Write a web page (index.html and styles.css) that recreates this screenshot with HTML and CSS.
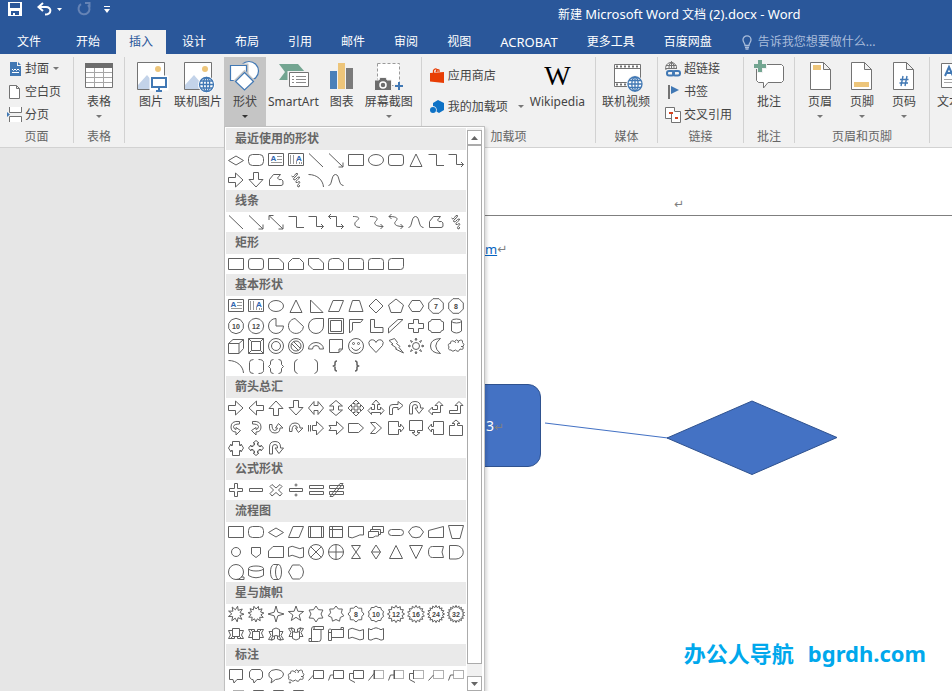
FILE: index.html
```html
<!DOCTYPE html>
<html lang="zh-CN">
<head>
<meta charset="utf-8">
<title>新建 Microsoft Word 文档 (2).docx - Word</title>
<link rel="stylesheet" href="styles.css">
</head>
<body>
<div class="app">
  <header class="titlebar">
    <div class="quick">
      <button class="qbtn save" aria-label="保存"><svg width="14" height="14" viewBox="0 0 14 14"><path fill="#fff" fill-rule="evenodd" d="M0 0H14V14H0ZM2 1V6H12V1ZM3 9V13H5V11H7V13H11V9Z"/></svg></button>
      <button class="qbtn" aria-label="撤消"><svg width="15" height="14" viewBox="0 0 15 14"><path fill="none" stroke="#fff" stroke-width="2" d="M6 1L1.500 5L6 9M2 5H9C15 5 15 12.500 8 12.500"/></svg></button>
      <button class="qbtn drop" aria-label="撤消列表"><svg width="5" height="3" viewBox="0 0 5 3"><path fill="#fff" d="M0 0H5L2.500 3Z"/></svg></button>
      <button class="qbtn redo" aria-label="重复"><svg width="14" height="14" viewBox="0 0 14 14"><path fill="none" stroke="#6583b5" stroke-width="2" d="M4 2.200A5.500 5.500 0 1 0 11 3M8 1H12.500V5.500"/></svg></button>
      <button class="qbtn" aria-label="自定义快速访问工具栏"><svg width="6" height="7" viewBox="0 0 6 7"><path fill="#fff" d="M0 0H6V1H0ZM0 3H6L3 7Z"/></svg></button>
    </div>
    <h1 class="title">新建 <span class="latin">Microsoft Word</span> 文档 <span class="latin">(2).docx - Word</span></h1>
  </header>

  <nav class="tabs">
    <button class="tab file">文件</button>
    <button class="tab">开始</button>
    <button class="tab active">插入</button>
    <button class="tab">设计</button>
    <button class="tab">布局</button>
    <button class="tab">引用</button>
    <button class="tab">邮件</button>
    <button class="tab">审阅</button>
    <button class="tab">视图</button>
    <button class="tab latin">ACROBAT</button>
    <button class="tab">更多工具</button>
    <button class="tab">百度网盘</button>
    <label class="tell">
      <svg width="10" height="15" viewBox="0 0 10 15"><path fill="none" stroke="#a9bcda" stroke-width="1.300" d="M3 10.500C3 8 1 7.500 1 4.800A4 4 0 0 1 9 4.800C9 7.500 7 8 7 10.500ZM3 12.500H7M3.500 14.200H6.500"/></svg>
      <input type="text" aria-label="告诉我您想要做什么" placeholder="告诉我您想要做什么...">
    </label>
  </nav>

  <section class="ribbon">
    <div class="group">
      <div class="stack">
        <button class="small"><svg class="ic" viewBox="0 0 16 16"><path fill="#4178b4" d="M3 1H10V5H14V15H3ZM11 1L14 4H11Z"/><path fill="none" stroke="#fff" d="M5 8L6.500 9.500L8 8L9.500 9.500L11 8L12.500 9.500M5 11.500H12"/></svg>封面<i class="arrow"></i></button>
        <button class="small"><svg class="ic" viewBox="0 0 16 16"><path fill="#fff" stroke="#737373" d="M2.500 1.500H9.500L12.500 4.500V14.500H2.500ZM9.500 1.500V4.500H12.500"/></svg>空白页</button>
        <button class="small"><svg class="ic" viewBox="0 0 16 16"><path fill="#fff" stroke="#737373" d="M2.500 0V5.500H14.500V0M2.500 15V9.500H14.500V15"/><path fill="#4178b4" d="M0 5L3 7.500L0 10Z"/></svg>分页</button>
      </div>
      <div class="caption">页面</div>
    </div>

    <div class="group">
      <div class="bigs">
        <button class="big"><svg class="pic" viewBox="0 0 32 32"><path fill="#fff" stroke="#737373" d="M2.500 3.500H29.500V27.500H2.500Z"/><path fill="#6d6d6d" d="M2 3H30V8H2Z"/><path stroke="#a6a6a6" fill="none" d="M3 12.500H29M3 17.500H29M3 22.500H29M11.500 8V27M20.500 8V27"/></svg><span>表格</span><i class="arrow"></i></button>
      </div>
      <div class="caption">表格</div>
    </div>

    <div class="group">
      <div class="bigs pictures">
        <button class="big"><svg class="pic" viewBox="0 0 32 32"><path fill="#fff" stroke="#737373" d="M2.500 2.500H29.500V29.500H2.500Z"/><circle cx="23" cy="9" r="3" fill="#edc57a"/><path fill="#c3d3e9" d="M3 25L12 15L24 29H3Z"/><path fill="#fff" stroke="#fff" stroke-width="3" d="M16 17H32V29H16Z"/><path fill="#fff" stroke="#4178b4" stroke-width="2" d="M17 18H31V27H17ZM24 27V31M21 31H27"/></svg><span>图片</span></button>
        <button class="big"><svg class="pic" viewBox="0 0 32 32"><path fill="#fff" stroke="#737373" d="M2.500 2.500H29.500V29.500H2.500Z"/><circle cx="23" cy="9" r="3" fill="#edc57a"/><path fill="#c3d3e9" d="M3 25L12 15L24 29H3Z"/><circle cx="24.500" cy="24.500" r="8.500" fill="#fff"/><g fill="none" stroke="#4178b4" stroke-width="1.300"><circle cx="24.500" cy="24.500" r="7"/><ellipse cx="24.500" cy="24.500" rx="3.200" ry="7"/><path d="M17.500 24.500H31.500M24.500 17.500V31.500M18.500 21H30.500M18.500 28H30.500"/></g></svg><span>联机图片</span></button>
        <button class="big on" aria-expanded="true"><svg class="pic" viewBox="0 0 32 32"><g fill="#fff" stroke="#4178b4" stroke-width="1.200"><circle cx="20" cy="11" r="9.500"/><path stroke="#c5c5c5" stroke-width="4" d="M1.500 5.500H17.500V20.500H1.500Z"/><path d="M1.500 5.500H17.500V20.500H1.500Z"/><path stroke="#c5c5c5" stroke-width="4" d="M15.500 12.500L24.500 21.500L15.500 30L6.500 21.500Z"/><path d="M15.500 12.500L24.500 21.500L15.500 30L6.500 21.500Z"/></g></svg><span>形状</span><i class="arrow dark"></i></button>
        <button class="big"><svg class="pic" viewBox="0 0 32 32"><path fill="#73a591" d="M2 4H21L28 12L21 20H2L8 12Z"/><path fill="#fff" stroke="#f1f1f1" stroke-width="3" d="M12 12.500H31V26.500H12Z"/><path fill="#fff" stroke="#737373" d="M12.500 12.500H31.500V26.500H12.500Z"/><path fill="none" stroke="#8a8a8a" d="M15 16.500H17M19 16.500H29M15 19.500H17M19 19.500H29M15 22.500H17M19 22.500H29"/></svg><span>SmartArt</span></button>
        <button class="big"><svg class="pic" viewBox="0 0 32 32"><path fill="#4a80b9" d="M4 11H11V29H4Z"/><path fill="#edc57a" d="M12 3H19V29H12Z"/><path fill="#7b7b7b" d="M20 8H27V29H20Z"/></svg><span>图表</span></button>
        <button class="big"><svg class="pic" viewBox="0 0 32 32"><path fill="#fff" stroke="#9a9a9a" stroke-dasharray="3 2" d="M4.500 3.500H26.500V25.500H4.500Z"/><path fill="#6d6d6d" stroke="#f1f1f1" d="M1.500 20H6L7 17.500H13L14 20H18.500V30.500H1.500Z"/><circle cx="10" cy="25" r="3" fill="#6d6d6d" stroke="#fff" stroke-width="1.500"/><path stroke="#f1f1f1" stroke-width="5" d="M21.500 26H31"/><path stroke="#4178b4" stroke-width="2" d="M22 26H30M26 22V30"/></svg><span>屏幕截图</span><i class="arrow"></i></button>
      </div>
    </div>

    <div class="group">
      <div class="addins">
        <div class="stack wide">
          <button class="small"><svg class="ic" viewBox="0 0 16 16"><path fill="#e83e05" d="M1 5L15 4V15L1 13.500Z"/><path fill="none" stroke="#e83e05" stroke-width="1.300" d="M4.500 6V2.500Q6 0 8 1.500V4M7 4Q8 .5 10 2V4"/></svg>应用商店</button>
          <button class="small"><svg class="ic" viewBox="0 0 16 16"><path fill="#0e72c6" d="M9 1L15 4V11L10 14L7.500 12.500A4 4 0 0 0 4 7V4Z"/><circle cx="4" cy="11" r="3" fill="#0e72c6"/></svg>我的加载项<i class="arrow far"></i></button>
        </div>
        <button class="big"><span class="wiki" aria-hidden="true">W</span><span>Wikipedia</span></button>
      </div>
      <div class="caption">加载项</div>
    </div>

    <div class="group">
      <div class="bigs media">
        <button class="big"><svg class="pic" viewBox="0 0 32 32"><path fill="#fff" stroke="#737373" d="M4.500 4.500H30.500V26.500H4.500ZM4.500 8.500H30.500M4.500 22.500H30.500"/><path stroke="#737373" stroke-width="2" stroke-dasharray="2 2" d="M6 6.500H30M6 24.500H30"/><circle cx="25" cy="24" r="8.500" fill="#f1f1f1"/><g fill="none" stroke="#4178b4" stroke-width="1.300"><circle cx="25" cy="24" r="7" fill="#fff"/><ellipse cx="25" cy="24" rx="3.200" ry="7"/><path d="M18 24H32M25 17V31M19 20.500H31M19 27.500H31"/></g></svg><span>联机视频</span></button>
      </div>
      <div class="caption">媒体</div>
    </div>

    <div class="group">
      <div class="stack links">
        <button class="small"><svg class="ic" viewBox="0 0 16 16"><g fill="none" stroke="#737373"><path d="M1 9A5.500 5.500 0 1 1 11.500 8M1 4.500H11.500M.5 7.500H11.500M6.500 .5V8M4 8Q3 4 6.500 .5Q10 4 9 8"/></g><g fill="none" stroke="#4178b4" stroke-width="2"><rect x="2" y="10" width="7" height="4.500" rx="2"/><rect x="8" y="10" width="7" height="4.500" rx="2"/></g></svg>超链接</button>
        <button class="small"><svg class="ic" viewBox="0 0 16 16"><path fill="#737373" d="M3 1H5V15H3Z"/><path fill="#4178b4" d="M6 2L14 6L6 10Z"/></svg>书签</button>
        <button class="small"><svg class="ic" viewBox="0 0 16 16"><path fill="#fff" stroke="#737373" d="M.5 .5H9.500V11.500H.5Z"/><path fill="#fff" stroke="#737373" d="M6.500 5V15.500H15.500V4.500H10"/><path fill="#d8431f" d="M4 5H8V7H4ZM10 10H13V12H10Z"/></svg>交叉引用</button>
      </div>
      <div class="caption">链接</div>
    </div>

    <div class="group">
      <div class="bigs">
        <button class="big"><svg class="pic" viewBox="0 0 32 32"><path fill="#fff" stroke="#737373" d="M5.500 4.500H28.500L30.500 6.500V20.500L28.500 22.500H15L10.500 28V22.500H5.500L3.500 20.500V6.500Z"/><path stroke="#f1f1f1" stroke-width="6" d="M-.5 6H14M7 -1V13"/><path stroke="#73a591" stroke-width="4" d="M1 6H13M7 0V12"/></svg><span>批注</span></button>
      </div>
      <div class="caption">批注</div>
    </div>

    <div class="group">
      <div class="bigs">
        <button class="big"><svg class="pic" viewBox="0 0 32 32"><path fill="#fff" stroke="#737373" d="M6.500 2.500H19.500L26.500 9.500V29.500H6.500ZM19.500 2.500V9.500H26.500"/><path fill="#edc57a" d="M9 5H17V10H9Z"/></svg><span>页眉</span><i class="arrow"></i></button>
        <button class="big"><svg class="pic" viewBox="0 0 32 32"><path fill="#fff" stroke="#737373" d="M5.500 2.500H18.500L25.500 9.500V29.500H5.500ZM18.500 2.500V9.500H25.500"/><path fill="#edc57a" d="M8 22H23V27H8Z"/></svg><span>页脚</span><i class="arrow"></i></button>
        <button class="big"><svg class="pic" viewBox="0 0 32 32"><path fill="#fff" stroke="#737373" d="M5.500 2.500H18.500L25.500 9.500V29.500H5.500ZM18.500 2.500V9.500H25.500"/><path fill="none" stroke="#4178b4" stroke-width="1.400" d="M15 16L13 26M19 16L17 26M12 19.500H20.500M11.500 23H20"/></svg><span>页码</span><i class="arrow"></i></button>
      </div>
      <div class="caption">页眉和页脚</div>
    </div>

    <div class="group">
      <div class="bigs">
        <button class="big"><svg class="pic" viewBox="0 0 32 32"><path fill="#fff" stroke="#737373" d="M2.500 3.500H29.500V27.500H2.500Z"/><path fill="none" stroke="#a6a6a6" d="M5 19.500H27M5 22.500H27"/><path fill="none" stroke="#4178b4" stroke-width="2" d="M6 16L10 7L14 16M7.500 13H12.500"/></svg><span>文本框</span></button>
      </div>
    </div>
  </section>

  <main class="desk">
    <article class="page">
      <div class="page-head"><span class="mark">↵</span></div>
      <p class="para"><a href="#">m</a><span class="mark">↵</span></p>
      <div class="node">3<span class="mark">↵</span></div>
      <svg class="drawing" width="294" height="76" viewBox="0 0 294 76"><path stroke="#4472c4" stroke-width="1.200" d="M1 23L124 38"/><path fill="#4472c4" stroke="#2f528f" d="M123 38L208 1L293 37.500L208 74.500Z"/></svg>
      <div class="brand"><span>办公人导航</span><span>bgrdh.com</span></div>
    </article>
  </main>

  <aside class="gallery" aria-label="形状">
    <div class="list">
      <h2>最近使用的形状</h2><div class="cells" data-set="recent"></div>
      <h2>线条</h2><div class="cells" data-set="lines"></div>
      <h2>矩形</h2><div class="cells" data-set="rects"></div>
      <h2>基本形状</h2><div class="cells" data-set="basic"></div>
      <h2>箭头总汇</h2><div class="cells" data-set="arrows"></div>
      <h2>公式形状</h2><div class="cells" data-set="math"></div>
      <h2>流程图</h2><div class="cells" data-set="flow"></div>
      <h2>星与旗帜</h2><div class="cells" data-set="stars"></div>
      <h2>标注</h2><div class="cells" data-set="callouts"></div>
    </div>
    <div class="scroll">
      <button class="step" aria-label="向上滚动"><svg width="7" height="4" viewBox="0 0 7 4"><path fill="#666" d="M0 4H7L3.500 0Z"/></svg></button>
      <div class="thumb"></div>
      <button class="step" aria-label="向下滚动"><svg width="7" height="4" viewBox="0 0 7 4"><path fill="#666" d="M0 0H7L3.500 4Z"/></svg></button>
    </div>
  </aside>
</div>
<script src="shapes.js"></script>
</body>
</html>
```

FILE: styles.css
```css
* { box-sizing: border-box; }

body {
  margin: 0;
  font: 12px/18px "Noto Sans", "Noto Sans CJK SC", sans-serif;
  color: #444;
  background: #e6e6e6;
}

button {
  border: 0;
  padding: 0;
  background: none;
  font: inherit;
  color: inherit;
  white-space: nowrap;
}

svg { display: block; flex: none; overflow: visible; }

.app {
  position: relative;
  display: flex;
  flex-direction: column;
  height: 100vh;
  overflow: hidden;
}

.latin { font-size: 13px; }

/* Title bar */
.titlebar {
  display: flex;
  flex: none;
  height: 30px;
  background: #2a579a;
  color: #fff;
}
.quick {
  display: flex;
  align-items: center;
  width: 558px;
  height: 18px;
  padding-left: 8px;
}
.save { margin-right: 15px; }
.drop { margin: 0 15px 0 5px; }
.redo { margin-right: 13px; }
.title {
  margin: 4px 0 0;
  font-size: 12px;
  line-height: 20px;
  font-weight: 400;
  white-space: nowrap;
}

/* Tabs */
.tabs {
  display: flex;
  flex: none;
  gap: 3px;
  height: 24px;
  background: #2a579a;
  color: #fff;
}
.tab { padding: 0 13px; line-height: 22px; }
.tab.file { padding: 0 17px; margin-right: 2px; }
.tab.active { background: #f1f1f1; color: #2a579a; }
.tell {
  display: flex;
  align-items: center;
  flex: 1;
  min-width: 0;
  gap: 6px;
  padding-left: 14px;
}
.tell input {
  flex: 1;
  min-width: 0;
  border: 0;
  padding: 0;
  background: none;
  font: inherit;
  color: #fff;
}
.tell input::placeholder { color: #a9bcda; opacity: 1; }

/* Ribbon */
.ribbon {
  display: flex;
  flex: none;
  height: 94px;
  padding: 3px 0 4px;
  overflow: hidden;
  background: #f1f1f1;
  border-bottom: 1px solid #d2d2d2;
}
.group {
  display: flex;
  flex: none;
  flex-direction: column;
  justify-content: space-between;
  border-right: 1px solid #d2d2d2;
}
.caption { line-height: 12px; text-align: center; color: #666; }
.bigs { display: flex; padding: 0 4px; }
.pictures { padding: 0 6px 0 5px; }
.media { padding-right: 5px; }
.big {
  display: flex;
  flex-direction: column;
  align-items: center;
  min-width: 42px;
  height: 69px;
  padding: 3px 2px 0;
}
.big.on { background: #c5c5c5; }
.pic { width: 32px; height: 32px; margin-bottom: 1px; }
.wiki {
  height: 33px;
  font: 28px/32px "Liberation Serif", serif;
  color: #000;
}
.arrow {
  margin-top: 4px;
  border: 3px solid transparent;
  border-top-color: #777;
  border-bottom: 0;
}
.arrow.dark { border-top-color: #333; }
.stack { display: flex; flex-direction: column; padding: 0 12px 0 7px; }
.small {
  display: flex;
  align-items: center;
  gap: 2px;
  height: 23px;
}
.small .arrow { margin: 0 0 0 2px; }
.small .arrow.far { margin-left: 7px; }
.links { padding-right: 11px; }
.links .small, .wide .small { gap: 3px; }
.ic { width: 16px; height: 16px; }
.addins { display: flex; padding-right: 8px; }
.wide { padding: 3px 4px 0 7px; }
.wide .small { height: 31px; }

/* Document */
.desk {
  display: flex;
  flex: 1;
  min-height: 0;
  padding-left: 226px;
}
.page {
  position: relative;
  flex: 1;
  min-width: 0;
  background: #fff;
}
.page-head {
  height: 68px;
  padding: 47px 0 0 448px;
  border-bottom: 1px solid #7f7f7f;
}
.mark { font: 12px/18px "DejaVu Sans", sans-serif; color: #7f7f7f; }
.para { display: flex; margin: 24px 0 0; padding-left: 259px; }
.para a { font-size: 13px; color: #0563c1; }

/* Shapes lying freely on the page */
.node {
  position: absolute;
  left: 100px;
  top: 236px;
  width: 215px;
  height: 83px;
  padding-left: 159px;
  border: 1px solid #2f528f;
  border-radius: 13px;
  background: #4472c4;
  color: #fff;
  font-size: 14px;
  line-height: 81px;
}
.drawing { position: absolute; left: 318px; top: 252px; }
.brand {
  position: absolute;
  right: 26px;
  bottom: 22px;
  display: flex;
  gap: 14px;
  font: bold 22px/32px "Noto Sans", "Noto Sans CJK SC", sans-serif;
  color: #00a8ec;
}

/* Shape gallery drop-down */
.gallery {
  position: absolute;
  left: 224px;
  top: 126px;
  bottom: 0;
  display: flex;
  gap: 1px;
  padding: 1px 1px 0;
  overflow: hidden;
  background: #fff;
  border: 1px solid #c0c0c0;
  border-bottom: 0;
  box-shadow: 2px 2px 3px rgba(0, 0, 0, .15);
}
.list { overflow: hidden; }
.list h2 {
  margin: 0;
  padding-left: 9px;
  background: #eaeaea;
  font-size: 12px;
  line-height: 22px;
  font-weight: 700;
  color: #666;
}
.cells { display: grid; grid-template-columns: repeat(12, 20px); grid-auto-rows: 20px; }
.cells svg {
  width: 20px;
  height: 20px;
  fill: none;
  stroke: #606060;
}
.cells text {
  fill: #444;
  stroke: none;
  font: bold 7px "Liberation Sans", sans-serif;
  text-anchor: middle;
}
.cells .letter { fill: #2f66b0; font-size: 8px; }
.cells .dots { stroke-dasharray: 1 1; }
.scroll {
  display: flex;
  flex-direction: column;
  width: 15px;
  margin-right: 1px;
  padding-top: 2px;
  background: #f1f1f1;
}
.step {
  display: grid;
  place-items: center;
  height: 15px;
  background: #fff;
  border: 1px solid #ababab;
}
.thumb {
  flex: 1;
  margin-bottom: 12px;
  background: #fff;
  border: 1px solid #ababab;
}
```

FILE: shapes.js
```js
// Every glyph is drawn on a 20 x 20 grid.
const p = d => `<path d="${d}"/>`;
const num = n => `<text x="10" y="12.5">${n}</text>`;
const ring = (n, outer, inner, turn = 0) => {
  const count = inner ? n * 2 : n;
  const pts = [];
  for (let i = 0; i < count; i++) {
    const r = inner && i % 2 ? inner : outer;
    const a = (i / count) * Math.PI * 2 - Math.PI / 2 + turn;
    pts.push((10 + r * Math.cos(a)).toFixed(1) + "," + (10 + r * Math.sin(a)).toFixed(1));
  }
  return `<polygon points="${pts.join(" ")}"/>`;
};
const circle = (r, x = 10, y = 10) => `<circle cx="${x}" cy="${y}" r="${r}"/>`;
const turned = (deg, s) => `<g transform="rotate(${deg} 10 10)">${s}</g>`;
const flipped = s => `<g transform="matrix(-1 0 0 1 20 0)">${s}</g>`;

const rect = p("M2.500 4.500H17.500V15.500H2.500Z");
const round = `<rect x="2.500" y="4.500" width="15" height="11" rx="4"/>`;
const round2 = `<rect x="2.500" y="4.500" width="15" height="11" rx="2.500"/>`;
const diamond = p("M2.500 10.500L10 6L17.500 10.500L10 15Z");
const textH = p("M2.500 3.500H17.500V15.500H2.500Z") + `<path stroke="#999" d="M11 6.500H16M11 9.500H16M5 12.500H16"/><text class="letter" x="7.500" y="11">A</text>`;
const textV = p("M2.500 3.500H17.500V15.500H2.500Z") + `<path stroke="#999" d="M4.500 5V14M7.500 5V14M10.500 11V14M13.500 12V14M15.500 12V14"/><text class="letter" x="13" y="11">A</text>`;
const line = p("M3 3.500L17 17");
const lineA = p("M3 3.500L17 17M17 12.500V17H12.500");
const lineAA = p("M3 3.500L17 17M17 12.500V17H12.500M3 8V3.500H7.500");
const ellipse = `<ellipse cx="10" cy="10" rx="7.500" ry="5.500"/>`;
const tri = p("M10 4L16 16.500H4Z");
const elbow = p("M2.500 4.500H10.500V15.500H18");
const elbowA = p("M2.500 4.500H10.500V14.500H17.500M15 12L17.500 14.500L15 17");
const elbowAA = p("M2.500 4.500H10.500V14.500H17.500M15 12L17.500 14.500L15 17M5 2L2.500 4.500L5 7");
const arrowR = p("M2.500 7.500H9.500V3L17 10L9.500 17V12.500H2.500Z");
const freeform = p("M3.500 15.500V9.500L7.500 4.500H14.500L11.500 8Q12.500 10.500 15.500 9.500Q17.500 10 17 14Q16.800 15.500 15 15.500Z");
const scribble = p("M5.500 6Q7 8.500 8.500 5.500Q10 2.500 11.500 3.500Q12 5 9 7Q6.500 9 8 10Q9.500 10 11.500 7.500Q14 6 13.500 8Q9 11.500 10 12.500Q11.500 13 13 11.500Q15 12 13 13.500Q10.500 15.500 12 17Q14 17 13.500 15");
const arc = p("M2.500 4.500C11 4.500 17 10 17.500 17");
const curve = p("M2.500 15.500C6.500 15.500 5 4.500 9.500 4.500C14 4.500 12 15.500 17.500 15.500");
const sCurve = p("M7 4.500C16 4.500 12 8 10 9.500S8 15.500 14 15.500");
const sCurveA = p("M4 4.500C14 4.500 11 8 9.500 9.500S8 14.500 17 14.500M14.500 12L17 14.500L14.500 17");
const sCurveAA = p("M3 4.500C14 4.500 11 8 9.500 9.500S8 14.500 17 14.500M14.500 12L17 14.500L14.500 17M5.500 2L3 4.500L5.500 7");
const bentUp = p("M3.500 15.500V12.500H11.500V7.500H9L13 3.500L17 7.500H14.500V15.500Z");
const uTurn = p("M3.500 16V9Q3.500 3.500 9 3.500T14.500 9V10H17.500L13 15.500L9 10H11.500V9Q11.500 6.500 9 6.500T6.500 9V16Z");
const leftRight = p("M2.500 10L8 3.500V7.500H12V3.500L17.500 10L12 16.500V12.500H8V16.500Z");
const quad = p("M10 2L13.500 5.500H11V9H14.500V6.500L18 10L14.500 13.500V11H11V14.500H13.500L10 18L6.500 14.500H9V11H5.500V13.500L2 10L5.500 6.500V9H9V5.500H6.500Z");
const tee = p("M10 2L14 6.500H11.500V11.500H14.500V9L18 12.500L14.500 16.500V14.500H5.500V16.500L2 12.500L5.500 9V11.500H8.500V6.500H6Z");
const curved = p("M13.500 3.500Q5 2.500 5 9Q5 14 10 14V17L14.500 12.500L10 9.500V11.500Q7.500 11 7.500 8.500Q8 6 13.500 6Z");
const calloutR = p("M2.500 3.500H12.500V8.500H14.500V6L18 10L14.500 14V11.500H12.500V16.500H2.500Z");
const cloud = p("M5 14Q1.500 14 3 11Q1 7.500 4.500 7.500Q4.500 3.500 8.500 5.500Q10.500 2.500 12.500 5Q17 2.500 16.500 6.500Q19 8.500 17 10.500Q18 14.500 14 13Q12.500 17 9.500 14Q6.500 16.500 5 14ZM8.500 5.500Q9.500 6 9.500 7M12.500 5L12 7M17 10.500H15");
const ribbonUp = p("M6.500 14.500H2.500L4.500 11L2.500 6.500H6.500M13.500 14.500H17.500L15.500 11L17.500 6.500H13.500M6.500 4.500H13.500V12.500H6.500ZM6.500 12.500L4.500 14.500H8.500V12.500M13.500 12.500L15.500 14.500H11.500V12.500");
const ribbonArc = p("M6.500 16L2.500 15.500L5 11.500L3 7.500L6.500 7.500M13.500 16L17.500 15.500L15 11.500L17 7.500L13.500 7.500M6.500 12.500V5.500Q10 2.500 13.500 5.500V12.500Q10 10.500 6.500 12.500L5 16L8.500 15V12M13.500 12.500L15 16L11.500 15V12");
const wave = p("M2.500 5.500Q6 3 10 5.500T17.500 5.500V15Q14 17 10 14.500T2.500 14.500Z");
const boxCall = (tail, cls = "") => `<path class="${cls}" d="M7.500 4.500H17.500V12.500H7.500Z"/>` + p(tail);

const sets = {
  recent: [diamond, round, textH, textV, line, lineA, rect, ellipse, round2, tri, elbow, elbowA,
    arrowR, turned(90, arrowR), freeform, scribble, arc, curve],
  lines: [line, lineA, lineAA, elbow, elbowA, elbowAA, sCurve, sCurveA, sCurveAA, curve, freeform, scribble],
  rects: [rect, round2,
    p("M2.500 4.500H13L17.500 9V15.500H2.500Z"),
    p("M6.500 4.500H13.500L17.500 8.500V15.500H2.500V8.500Z"),
    p("M2.500 4.500H13L17.500 9V15.500H7L2.500 11Z"),
    p("M6.500 4.500H13L17.500 8.500V15.500H2.500V8.500Q2.500 4.500 6.500 4.500Z"),
    p("M2.500 4.500H14.500Q17.500 4.500 17.500 7.500V15.500H2.500Z"),
    p("M5.500 4.500H14.500Q17.500 4.500 17.500 7.500V15.500H2.500V7.500Q2.500 4.500 5.500 4.500Z"),
    p("M5.500 4.500H17.500V12.500Q17.500 15.500 14.500 15.500H2.500V7.500Q2.500 4.500 5.500 4.500Z")],
  basic: [textH, textV, ellipse, tri, p("M4.500 4V16.500H17Z"), p("M7 4.500H17.500L13 15.500H2.500Z"), p("M6.500 4.500H13.500L17 15.500H3Z"),
    p("M10 3L17 10L10 17L3 10Z"), p("M10 3L17.500 9L15 16.500H5L2.500 9Z"), p("M6 4.500H14L17.500 10L14 15.500H6L2.500 10Z"),
    ring(8, 7.900, 0, Math.PI / 8) + num(7), ring(8, 7.900, 0, Math.PI / 8) + num(8),
    ring(10, 7.700) + num(10), ring(12, 7.700) + num(12),
    p("M10 2.500A7.500 7.500 0 1 0 17.500 10H10Z"), p("M9 2.500A7.500 7.500 0 1 0 15 15.500Q17 14 17.500 10.500Z"),
    p("M10 2.500H17.500V10A7.500 7.500 0 1 1 10 2.500Z"), p("M2.500 2.500H17.500V17.500H2.500ZM4.500 4.500H15.500V15.500H4.500Z"),
    p("M3.500 3.500H17L14.500 6.500H6.500V14L3.500 17Z"), p("M4.500 3.500H8.500V11.500H17V16.500H4.500Z"), p("M2.500 12L12 3.500H17L2.500 17Z"),
    p("M7.500 3.500H12.500V7.500H17.500V12.500H12.500V16.500H7.500V12.500H2.500V7.500H7.500Z"),
    p("M5.500 3.500H14.500Q14.500 5.500 17.500 6V14Q14.500 14.500 14.500 16.500H5.500Q5.500 14.500 2.500 14V6Q5.500 5.500 5.500 3.500Z"),
    `<ellipse cx="10.500" cy="5" rx="5" ry="2"/>` + p("M5.500 5V15Q10.500 19 15.500 15V5"),
    p("M2.500 7.500L7 3.500H17.500V12.500L13 17.500H2.500ZM2.500 7.500H13V17.500M13 7.500L17.500 3.500"),
    p("M2.500 2.500H17.500V17.500H2.500ZM5.500 5.500H14.500V14.500H5.500ZM2.500 2.500L5.500 5.500M17.500 2.500L14.500 5.500M2.500 17.500L5.500 14.500M17.500 17.500L14.500 14.500"),
    circle(7.500) + circle(4.500), circle(7.500) + circle(5) + p("M5.500 7.500L12.500 14.500M7.500 5.500L14.500 12.500"),
    p("M2.500 13A7.500 6.500 0 0 1 17.500 13H13.500A3.500 3.500 0 0 0 6.500 13Z"),
    p("M3.500 3.500H16.500V13L13 16.500H3.500ZM13 16.500V13H16.500"),
    circle(7.500) + circle(1, 7.500, 7.500) + circle(1, 12.500, 7.500) + p("M5.500 11.500Q10 17.500 14.500 11.500"),
    p("M10 16.500L3.500 9.500Q1.500 6 4.500 4Q8.500 3 10 6.500Q11.500 3 15.500 4Q18.500 6 16.500 9.500Z"),
    p("M3 4.500L8.500 2.500L11.500 6.500L10.500 7.500L14 10.500L13 11.500L17.500 17L9.500 13L10.500 12L5.500 8.500L7 8Z"),
    circle(3.500) + p("M10 2L11 4H9ZM10 18L11 16H9ZM2 10L4 9V11ZM18 10L16 9V11ZM4.500 4.500L6.500 5.500L5.500 6.500ZM15.500 4.500L14.500 6.500L13.500 5.500ZM4.500 15.500L5.500 13.500L6.500 14.500ZM15.500 15.500L13.500 14.500L14.500 13.500Z"),
    p("M14.500 2.500Q4.500 3 4.500 10T14.500 17.500Q5 10 14.500 2.500Z"), cloud,
    arc, p("M7.500 3.500Q3.500 3.500 3.500 6.500V14.500Q3.500 17.500 7.500 17.500M12.500 3.500Q17.500 3.500 17.500 6.500V14.500Q17.500 17.500 12.500 17.500"),
    p("M7.500 3.500Q4.500 3.500 4.500 6V8.500L2.500 10.500L4.500 12.500V15Q4.500 17.500 7.500 17.500M12.500 3.500Q15.500 3.500 15.500 6V8.500L17.500 10.500L15.500 12.500V15Q15.500 17.500 12.500 17.500"),
    p("M11.500 3.500Q8.500 4.500 8.500 7V14Q8.500 16.500 11.500 17.500"), p("M8.500 3.500Q11.500 4.500 11.500 7V14Q11.500 16.500 8.500 17.500"),
    `<path stroke-width="1.500" d="M11 5Q9 5 9 7V9L7.500 10L9 11V13Q9 15 11 15"/>`, `<path stroke-width="1.500" d="M9 5Q11 5 11 7V9L12.500 10L11 11V13Q11 15 9 15"/>`],
  arrows: [arrowR, flipped(arrowR), turned(270, arrowR), turned(90, arrowR), leftRight, turned(90, leftRight), quad, tee,
    p("M3.500 16.500V9Q3.500 6.500 7 6.500H12V3.500L17 7.500L12 12V9.500H8Q6.500 9.500 6.500 11V16.500Z"), uTurn,
    p("M2.500 13L6.500 9V11.500H11.500V7.500H9L13 3.500L17 7.500H14.500V14.500H6.500V17Z"), bentUp,
    curved, flipped(curved), turned(270, curved), turned(90, flipped(turned(180, flipped(flipped(curved))))),
    p("M2.500 7V13.500M4.500 7V13.500M6.500 7.500H10.500V3.500L17.500 10L10.500 17V12.500H6.500Z"),
    p("M3 7.500H10.500V3.500L17.500 10L10.500 16.500V12.500H3L5 10Z"),
    p("M2.500 5.500H12.500L17.500 10L12.500 14.500H2.500Z"), p("M4.500 4.500H9.500L15.500 10L9.500 15.500H4.500L9.500 10Z"),
    calloutR, turned(90, calloutR), flipped(calloutR), turned(270, calloutR),
    p("M6.500 3.500H13.500V7.500H15V6L17.500 10L15 14V12.500H13.500V17.500H6.500V12.500H5V14L2.500 10L5 6V7.500H6.500Z"),
    p("M10 2.500L13 5H11.500V7H13V8.500H15V7L17.500 10L15 13V11.500H13V13H11.500V15H13L10 17.500L7 15H8.500V13H7V11.500H5V13L2.500 10L5 7V8.500H7V7H8.500V5H7Z"),
    uTurn],
  math: [p("M8.500 3.500H11.500V8.500H16.500V11.500H11.500V16.500H8.500V11.500H3.500V8.500H8.500Z"), p("M3.500 8.500H16.500V11.500H3.500Z"),
    p("M6 4.500L10 8L14 4.500L16 6.500L12.500 10L16 13.500L14 16L10 12.500L6 16L4 13.500L7.500 10L4 6.500Z"),
    p("M3.500 8.500H16.500V11.500H3.500Z") + circle(1, 10, 5) + circle(1, 10, 15),
    p("M3.500 5.500H17.500V8.500H3.500ZM3.500 11.500H17.500V14.500H3.500Z"), p("M3.500 5.500H17.500V8.500H3.500ZM3.500 11.500H17.500V14.500H3.500ZM4 16.500L14 3.500H17L7 16.500Z")],
  flow: [rect, round, diamond, p("M7 4.500H17.500L13 15.500H2.500Z"), p("M2.500 4.500H17.500V15.500H2.500ZM4.500 4.500V15.500M15.500 4.500V15.500"),
    p("M3.500 4.500H16.500V15.500H3.500ZM6.500 4.500V15.500M3.500 7.500H16.500"), p("M2.500 4.500H17.500V13Q14 12 10 14.500T2.500 15Z"),
    p("M2.500 9.500H12.500V14Q9 13.500 7 15.500H2.500ZM4.500 9V7.500H14.500V12.500H13M6.500 7V4.500H17.500V10.500H15"),
    `<rect x="2.500" y="7.500" width="15" height="6" rx="3"/>`, p("M6 5.500Q10 3.500 14 5.500L17.500 10L14 15Q10 16.500 6 15L2.500 10Z"),
    p("M2.500 8.500L17.500 4.500V15.500H2.500Z"), p("M2.500 3.500H17.500L14 16.500H6Z"),
    circle(4.500), p("M5.500 5.500H14.500V12L10 15.500L5.500 12Z"), p("M2.500 9L7 4.500H17.500V15.500H2.500Z"), wave,
    circle(7.500) + p("M4.500 4.500L15.500 15.500M15.500 4.500L4.500 15.500"), circle(7.500) + p("M10 2.500V17.500M2.500 10H17.500"),
    p("M5.500 3.500H14.500L5.500 16.500H14.500Z"), p("M10 3L14.500 10L10 17L5.500 10ZM5.500 10H14.500"), p("M10 3.500L16.500 16.500H3.500Z"), p("M3.500 3.500H16.500L10 16.500Z"),
    p("M6.500 4.500H17.500Q14.500 10 17.500 15.500H6.500Q2.500 15.500 2.500 10T6.500 4.500Z"), p("M3.500 3.500H10A7 6.500 0 0 1 10 17H3.500Z"),
    circle(7.500) + p("M10 17.500H18V15H15"), `<ellipse cx="10" cy="6.500" rx="7.500" ry="2.500"/>` + p("M2.500 6.500V13.500Q10 18 17.500 13.500V6.500"),
    `<ellipse cx="12.500" cy="10" rx="3" ry="7.500"/>` + p("M12.500 2.500H7.500Q4.500 4 4.500 10T7.500 17.500H12.500"),
    p("M6.500 3H13.500Q17.500 5 17.500 10T13.500 17H6.500L2.500 10Z")],
  stars: [ring(9, 8, 4.200, .2), ring(11, 8, 5, .3), ring(4, 8, 2.500), ring(5, 8, 3.300), ring(6, 8, 5), ring(7, 8, 5.500),
    ring(8, 8, 6.400) + num(8), ring(10, 8, 6.800) + num(10), ring(12, 8.600, 6.200) + num(12),
    ring(14, 8.600, 6.400) + num(16), ring(16, 8.600, 6.400) + num(24), ring(18, 8.600, 6.400) + num(32),
    ribbonUp, `<g transform="matrix(1 0 0 -1 0 20)">${ribbonUp}</g>`, ribbonArc, `<g transform="matrix(1 0 0 -1 0 20)">${ribbonArc}</g>`,
    p("M5.500 15V5Q5.500 2.500 8 2.500H17.500V5.500H15V15Q15 17.500 12.500 17.500H3V14.500H5.500M8 2.500Q9 5.500 7 5.500H15M5.500 14.500V17.500"),
    p("M5.500 5.500H17.500V13.500H5.500M5.500 5.500Q2.500 4 2.500 7V16.500H5.500V5.500M2.500 8.500H5.500M17.500 5.500V3.500H15V5.500"),
    wave, p("M2.500 4.500Q5 7 7.500 4.500Q10 3 12.500 4.500Q15 7 17.500 4.500V15.500Q15 17 12.500 15Q10 13.500 7.500 15Q5 17 2.500 15.500Z")],
  callouts: [p("M3.500 3.500H16.500V13.500H11L8 17L7 13.500H3.500Z"), p("M5.500 3.500H14.500L16.500 6V11L14.500 13.500H11L8 17L7 13.500H5.500L3.500 11V6Z"),
    p("M6 13Q1.500 11 3 7Q5 3.500 10 3.500Q16.500 4 17.500 8Q17 13 9.500 13.500L5 17Z"), cloud + circle(.7, 4, 16.500),
    boxCall("M2.500 14.500L7.500 9"), boxCall("M2.500 14.500L4.500 9H7.500"), boxCall("M7.500 7.500H3.500V13.500L9 16.500"),
    boxCall("M2.500 14.500L8.500 7M8.500 4V13", "dots"), boxCall("M2.500 14.500L4.500 9H8.500M8.500 4V13", "dots"), boxCall("M7.500 7.500H3.500V13.500L9 16.500M7.500 4V13", "dots"),
    boxCall("M2.500 14.500L7.500 9", "dots"), boxCall("M2.500 14.500L4.500 9H7.500", "dots"),
    boxCall("M7.500 8H3.500V13.500L9 16.500", "dots"), boxCall("M2.500 14.500L7.500 8"), boxCall("M2.500 14.500L4.500 9H7.500"), boxCall("M7.500 8H3.500V13.500")]
};

document.querySelectorAll(".cells").forEach(box => {
  const title = box.previousElementSibling.textContent;
  box.innerHTML = sets[box.dataset.set]
    .map((art, i) => `<button aria-label="${title} ${i + 1}"><svg viewBox="0 0 20 20">${art}</svg></button>`)
    .join("");
});
```
